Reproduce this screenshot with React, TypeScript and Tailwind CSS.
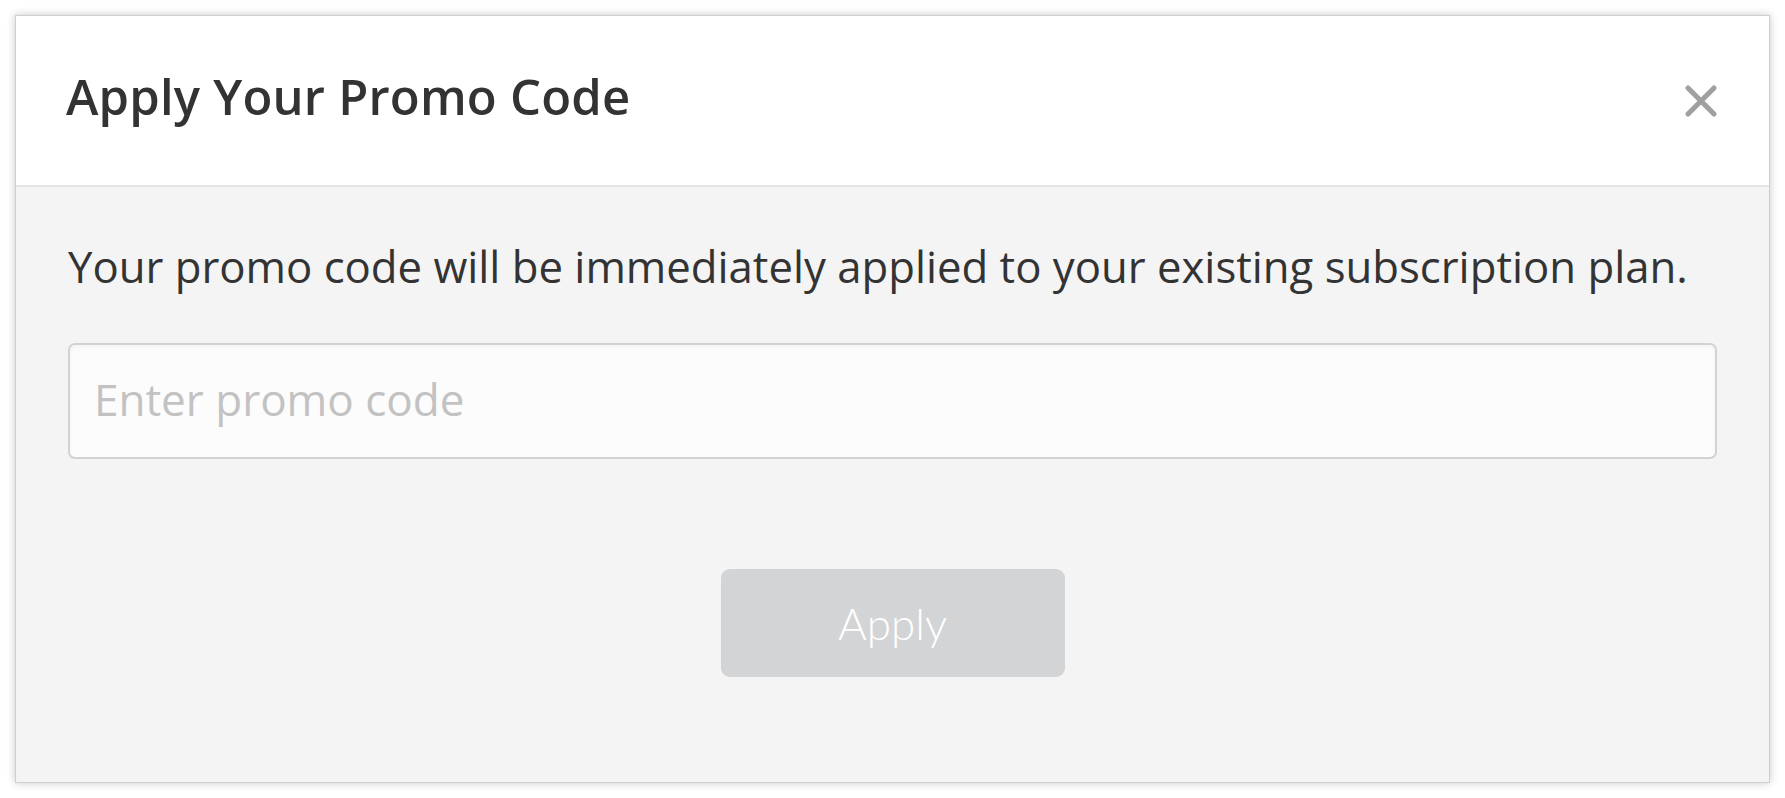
import React from "react";

function CloseIcon() {
  return (
    <svg width="34" height="34" viewBox="0 0 34 34" className="blur-[0.6px]" aria-hidden="true">
      <path d="M4 4 L30 30 M30 4 L4 30" stroke="#a0a0a0" strokeWidth="5.2" strokeLinecap="round" fill="none" />
    </svg>
  );
}

export default function App() {
  return (
    <div className="h-[798px] w-full bg-white p-[15px] font-['Open_Sans',sans-serif]">
      <div className="flex h-full flex-col border border-[#cfcfcf] bg-[#f4f4f4] shadow-[0_0_8px_rgba(0,0,0,0.22)]">
        <header className="flex h-[171px] shrink-0 items-center justify-between border-b-2 border-[#e4e4e4] bg-white pb-[8px] pl-[50px] pr-[51px]">
          <h1 className="text-[49px] font-semibold tracking-[0.2px] text-[#333333]">Apply Your Promo Code</h1>
          <button type="button" className="mt-[8px] flex items-center justify-center" aria-label="Close">
            <CloseIcon />
          </button>
        </header>
        <div className="flex flex-1 flex-col px-[52px] pt-[55px]">
          <p className="text-[43.7px] leading-[48px] text-[#333333]">
            Your promo code will be immediately applied to your existing subscription plan.
          </p>
          <input
            type="text"
            placeholder="Enter promo code"
            className="mt-[53px] h-[116px] w-full rounded-[7px] border-2 border-[#d2d2d2] bg-[#fcfcfc] px-[24px] pb-[5px] text-[44px] text-[#333333] shadow-[inset_0_3px_4px_rgba(0,0,0,0.03)] outline-none placeholder:text-[#c2c2c2]"
          />
          <div className="mt-[110px] flex justify-center">
            <button
              type="button"
              className="h-[108px] w-[344px] rounded-[9px] bg-[#d3d4d6] font-['Lato',sans-serif] text-[44px] font-light text-white"
            >
              Apply
            </button>
          </div>
        </div>
      </div>
    </div>
  );
}
